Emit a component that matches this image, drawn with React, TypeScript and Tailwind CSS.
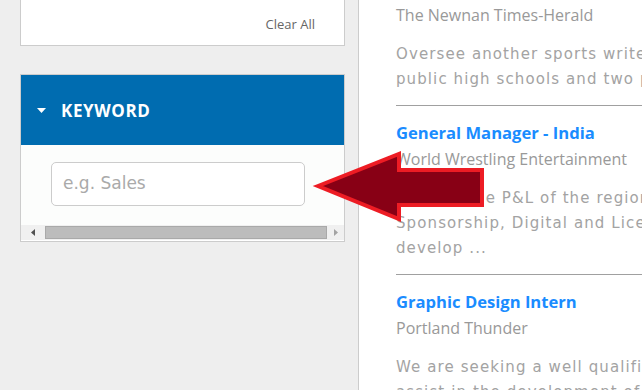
import React from "react";

interface Job {
  title?: string;
  company: string;
  lines: string[];
}

const jobs: Job[] = [
  {
    company: "The Newnan Times-Herald",
    lines: [
      "Oversee another sports writer and cover three",
      "public high schools and two private schools",
    ],
  },
  {
    title: "General Manager - India",
    company: "World Wrestling Entertainment",
    lines: [
      "Manage the P&L of the region including",
      "Sponsorship, Digital and Licensing and",
      "develop ...",
    ],
  },
  {
    title: "Graphic Design Intern",
    company: "Portland Thunder",
    lines: [
      "We are seeking a well qualified intern to",
      "assist in the development of brand assets",
    ],
  },
];

const JobItem: React.FC<{ job: Job; last?: boolean }> = ({ job, last }) => {
  return (
    <div className={last ? "" : "border-b border-[#a0a0a0] pb-[13px] mb-[13px]"}>
      {job.title && (
        <h2 className="text-[16.6px] font-bold leading-[27px] text-[#1a8cff] whitespace-nowrap">
          {job.title}
        </h2>
      )}
      <p className="text-[16px] leading-[27px] text-[#999] whitespace-nowrap">{job.company}</p>
      <div className="mt-[13px] font-['DejaVu_Sans',sans-serif] text-[15px] leading-[25px] tracking-[1.1px] text-[#a3a3a3]">
        {job.lines.map((l) => (
          <p key={l} className="whitespace-nowrap">
            {l}
          </p>
        ))}
      </div>
    </div>
  );
};

const App: React.FC = () => {
  return (
    <div className="relative flex h-[390px] w-[642px] overflow-hidden bg-[#eeeeee] font-['Open_Sans',sans-serif]">
      {/* filters column */}
      <div className="w-[358px] shrink-0 pl-[20px]">
        <div className="flex h-[46px] w-[325px] items-end justify-end border-x border-b border-[#cccccc] bg-white pb-[12px] pr-[29px]">
          <span className="text-[13px] leading-[18px] text-[#666]">Clear All</span>
        </div>

        <div className="mt-[28px] w-[325px] border border-[#cccccc] bg-white">
          <div className="flex h-[70px] items-center bg-[#006cb0] pl-[16px] pt-[2px]">
            <svg width="9" height="6" viewBox="0 0 9 6" className="mr-[15px]">
              <polygon points="0,0 9,0 4.5,5" fill="#ffffff" />
            </svg>
            <span className="text-[17px] font-bold tracking-[0.6px] text-white">KEYWORD</span>
          </div>
          <div className="bg-[#fcfdfc] pl-[30px] pt-[17px] pb-[19px]">
            <div className="flex h-[44px] w-[254px] items-center rounded-[5px] border border-[#cccccc] bg-white pl-[11px]">
              <span className="font-['DejaVu_Sans',sans-serif] text-[17px] text-[#aaaaaa]">e.g. Sales</span>
            </div>
          </div>
          {/* horizontal scrollbar */}
          <div className="mb-px flex h-[15px] items-center bg-[#f0f0f0]">
            <div className="flex w-[24px] justify-center">
              <svg width="4" height="7" viewBox="0 0 4 7">
                <polygon points="4,0 4,7 0,3.5" fill="#505050" />
              </svg>
            </div>
            <div className="h-[13px] w-[282px] border border-[#a9a9a9] bg-[#bcbcbc]" />
            <div className="flex flex-1 justify-center">
              <svg width="4" height="7" viewBox="0 0 4 7">
                <polygon points="0,0 0,7 4,3.5" fill="#a3a3a3" />
              </svg>
            </div>
          </div>
        </div>
      </div>

      {/* results column */}
      <div className="flex-1 border-l border-[#cccccc] bg-white pl-[37px] pt-[2px]">
        {jobs.map((job, i) => (
          <JobItem key={job.company} job={job} last={i === jobs.length - 1} />
        ))}
      </div>

      {/* annotation arrow */}
      <svg className="absolute left-0 top-0" width="642" height="390" viewBox="0 0 642 390">
        <polygon
          points="318,186 399,154 399,170 482,170 482,205 399,205 399,219"
          fill="#880015"
          stroke="#ed1c24"
          strokeWidth="4"
          strokeLinejoin="miter"
        />
      </svg>
    </div>
  );
};

export default App;
